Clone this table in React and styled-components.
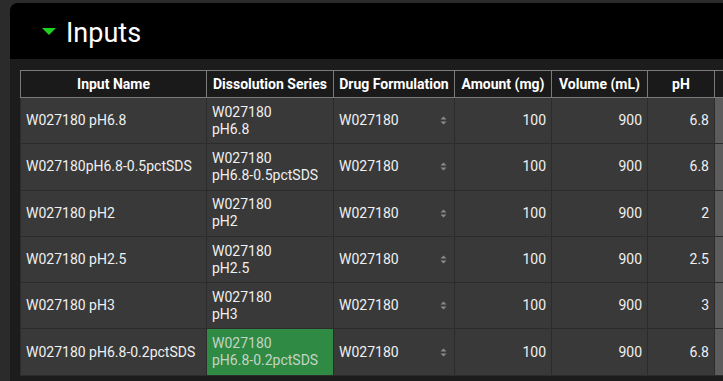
import React from "react";
import styled, { createGlobalStyle } from "styled-components";

const GlobalStyle = createGlobalStyle`
  html, body {
    margin: 0;
    padding: 0;
    background: #2b2b2b;
    overflow: hidden;
  }
  body {
    font-family: Roboto, "Liberation Sans", sans-serif;
  }
`;

const COLUMNS = [
  { title: "Input Name", width: 186 },
  { title: "Dissolution Series", width: 127 },
  { title: "Drug Formulation", width: 121 },
  { title: "Amount (mg)", width: 97 },
  { title: "Volume (mL)", width: 96 },
  { title: "pH", width: 67 },
  { title: "I", width: 120 },
];

const ROWS = [
  { name: "W027180 pH6.8", series: ["W027180", "pH6.8"], ph: "6.8" },
  { name: "W027180pH6.8-0.5pctSDS", series: ["W027180", "pH6.8-0.5pctSDS"], ph: "6.8" },
  { name: "W027180 pH2", series: ["W027180", "pH2"], ph: "2" },
  { name: "W027180 pH2.5", series: ["W027180", "pH2.5"], ph: "2.5" },
  { name: "W027180 pH3", series: ["W027180", "pH3"], ph: "3" },
  { name: "W027180 pH6.8-0.2pctSDS", series: ["W027180", "pH6.8-0.2pctSDS"], ph: "6.8", selected: true },
];

const Page = styled.div`
  width: 723px;
  height: 381px;
  padding: 3px 0 0 10px;
  box-sizing: border-box;
  overflow: hidden;
`;

const Panel = styled.section`
  background: #1c1c1c;
  border-radius: 8px 0 0 0;
  height: 100%;
  overflow: hidden;
`;

const Header = styled.div`
  height: 56px;
  background: #000;
  display: flex;
  align-items: center;
  gap: 10px;
  padding-left: 32px;
  padding-top: 4px;
  box-sizing: border-box;
`;

const Caret = styled.span`
  width: 0;
  height: 0;
  border-left: 7.5px solid transparent;
  border-right: 7.5px solid transparent;
  border-top: 7px solid #1fd01f;
  margin-bottom: 3px;
`;

const Title = styled.h2`
  margin: 0;
  color: #fff;
  font-size: 27px;
  font-weight: 400;
`;

const Body = styled.div`
  padding: 11px 0 0 10px;
`;

const Table = styled.table`
  border-collapse: collapse;
  table-layout: fixed;
  width: 814px;
`;

const HeadCell = styled.th`
  height: 26px;
  background: #1a1a1a;
  border: 1px solid #7a7a7a;
  color: #fff;
  font-size: 14px;
  font-weight: 700;
  text-align: center;
  padding: 0 3px;
  white-space: nowrap;
  overflow: hidden;
`;

const Cell = styled.td`
  height: 46.3px;
  background: ${(p) => (p.$selected ? "#2f8a43" : p.$disabled ? "#5c5c5c" : "#393939")};
  border: 1px solid #2c2c2c;
  color: ${(p) => (p.$selected ? "#c4d4c7" : "#f0f0f0")};
  font-size: 14px;
  line-height: 17px;
  padding: 0 5px;
  text-align: ${(p) => (p.$num ? "right" : "left")};
  white-space: nowrap;
  overflow: hidden;
  box-sizing: border-box;
`;

const SelectBox = styled.div`
  display: flex;
  align-items: center;
  justify-content: space-between;
  padding-right: 2px;
`;

const Arrows = () => (
  <svg width="7" height="11" viewBox="0 0 7 11">
    <path d="M3.5 1.5 L6.5 4.5 L0.5 4.5 Z" fill="#8a8a8a" />
    <path d="M3.5 9.5 L6.5 6.5 L0.5 6.5 Z" fill="#8a8a8a" />
  </svg>
);

const App = () => (
  <>
    <GlobalStyle />
    <Page>
      <Panel>
        <Header>
          <Caret />
          <Title>Inputs</Title>
        </Header>
        <Body>
          <Table>
            <colgroup>
              {COLUMNS.map((c) => (
                <col key={c.title} style={{ width: c.width }} />
              ))}
            </colgroup>
            <thead>
              <tr>
                {COLUMNS.map((c) => (
                  <HeadCell key={c.title}>{c.title}</HeadCell>
                ))}
              </tr>
            </thead>
            <tbody>
              {ROWS.map((r) => (
                <tr key={r.name}>
                  <Cell>{r.name}</Cell>
                  <Cell $selected={r.selected}>
                    {r.series[0]}
                    <br />
                    {r.series[1]}
                  </Cell>
                  <Cell>
                    <SelectBox>
                      W027180
                      <Arrows />
                    </SelectBox>
                  </Cell>
                  <Cell $num>100</Cell>
                  <Cell $num>900</Cell>
                  <Cell $num>{r.ph}</Cell>
                  <Cell $disabled />
                </tr>
              ))}
            </tbody>
          </Table>
        </Body>
      </Panel>
    </Page>
  </>
);

export default App;
